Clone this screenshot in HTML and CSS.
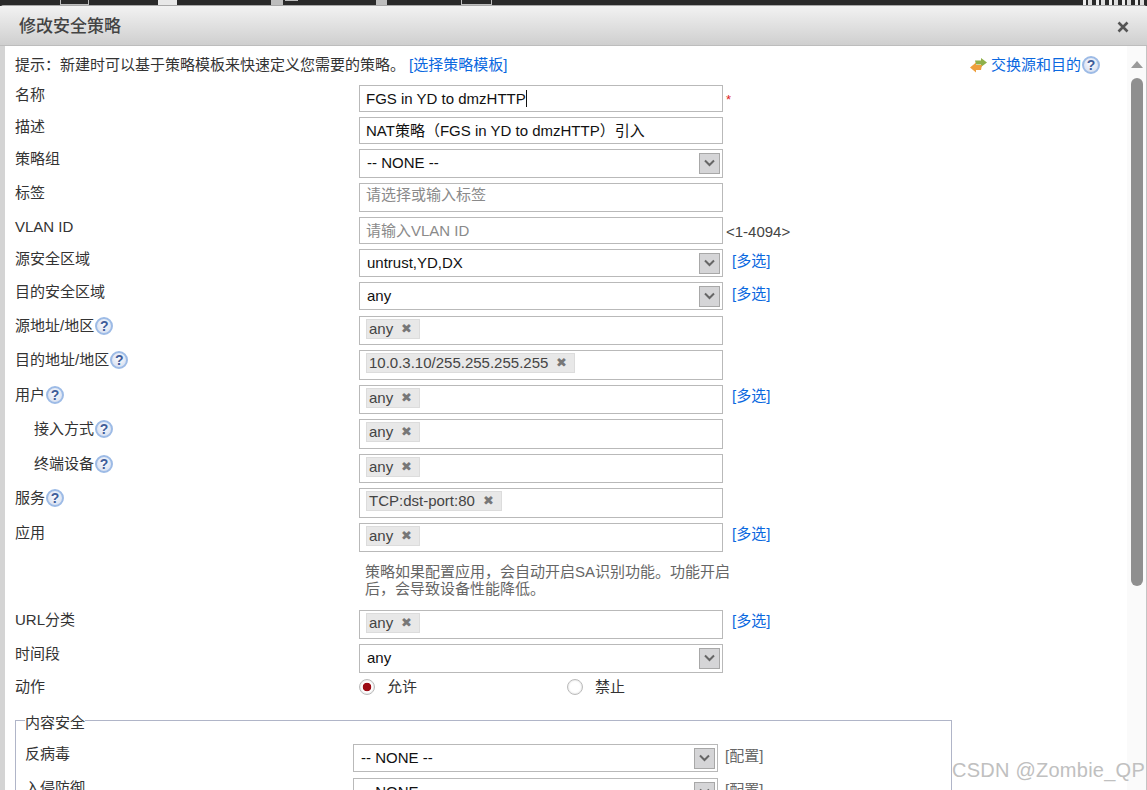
FILE: index.html
```html
<!DOCTYPE html>
<html lang="zh-CN">
<head>
<meta charset="utf-8">
<title>修改安全策略</title>
<link rel="stylesheet" href="styles.css">
</head>
<body>
<div class="backdrop">
  <span class="frag frag-a"></span><span class="frag frag-b"></span><span class="frag frag-c"></span><span class="frag frag-d"></span><span class="frag frag-e"></span><span class="frag frag-f"></span><span class="frag frag-g"></span>
</div>
<div class="dialog">
  <header class="titlebar">
    <h1 class="title">修改安全策略</h1>
    <svg class="close" width="12" height="12" viewBox="0 0 12 12"><path d="M1.5 1.5 10.5 10.5M10.5 1.5 1.5 10.5" stroke="#555" stroke-width="2.6"/></svg>
  </header>
  <div class="body">
    <main class="content">
      <div class="tip">
        <div>提示：新建时可以基于策略模板来快速定义您需要的策略。<a class="link tip-link">[选择策略模板]</a></div>
        <div class="swap">
          <svg class="swap-icon" width="19" height="15" viewBox="0 0 19 15"><path d="M6 2.500h6V0l6 4.500L12 9V6.500H7z" fill="#8fb04a"/><path d="M13 7H7V4.500L1 9.500l6 5V12h5z" fill="#ee9f3c"/></svg>
          <a class="link">交换源和目的</a><span class="help">?</span>
        </div>
      </div>

      <div class="row"><div class="label">名称</div><div class="field h27">FGS in YD to dmzHTTP<span class="caret"></span></div><span class="req">*</span></div>
      <div class="row"><div class="label">描述</div><div class="field h27">NAT策略（FGS in YD to dmzHTTP）引入</div></div>
      <div class="row"><div class="label">策略组</div><div class="field select h29">-- NONE --<span class="arrow"><svg width="13" height="8" viewBox="0 0 13 8"><path d="M2 1.500l4.500 4.500L11 1.500" fill="none" stroke="#666" stroke-width="2"/></svg></span></div></div>
      <div class="row"><div class="label">标签</div><div class="field top h29 ph">请选择或输入标签</div></div>
      <div class="row"><div class="label">VLAN ID</div><div class="field h27 ph">请输入VLAN ID</div><span class="note">&lt;1-4094&gt;</span></div>
      <div class="row"><div class="label">源安全区域</div><div class="field select h28">untrust,YD,DX<span class="arrow"><svg width="13" height="8" viewBox="0 0 13 8"><path d="M2 1.500l4.500 4.500L11 1.500" fill="none" stroke="#666" stroke-width="2"/></svg></span></div><a class="link more">[多选]</a></div>
      <div class="row r6"><div class="label">目的安全区域</div><div class="field select h28">any<span class="arrow"><svg width="13" height="8" viewBox="0 0 13 8"><path d="M2 1.500l4.500 4.500L11 1.500" fill="none" stroke="#666" stroke-width="2"/></svg></span></div><a class="link more">[多选]</a></div>
      <div class="row"><div class="label">源地址/地区<span class="help">?</span></div><div class="field tags h29"><span class="tag">any<i class="x">✖</i></span></div></div>
      <div class="row"><div class="label">目的地址/地区<span class="help">?</span></div><div class="field tags h30"><span class="tag">10.0.3.10/255.255.255.255<i class="x">✖</i></span></div></div>
      <div class="row"><div class="label">用户<span class="help">?</span></div><div class="field tags h29"><span class="tag">any<i class="x">✖</i></span></div><a class="link more">[多选]</a></div>
      <div class="row"><div class="label sub">接入方式<span class="help">?</span></div><div class="field tags h30"><span class="tag">any<i class="x">✖</i></span></div></div>
      <div class="row"><div class="label sub">终端设备<span class="help">?</span></div><div class="field tags h29"><span class="tag">any<i class="x">✖</i></span></div></div>
      <div class="row"><div class="label">服务<span class="help">?</span></div><div class="field tags h30"><span class="tag">TCP:dst-port:80<i class="x">✖</i></span></div></div>
      <div class="row"><div class="label">应用</div><div class="field tags h29"><span class="tag">any<i class="x">✖</i></span></div><a class="link more">[多选]</a></div>
      <div class="hint">策略如果配置应用，会自动开启SA识别功能。功能开启后，会导致设备性能降低。</div>
      <div class="row"><div class="label">URL分类</div><div class="field tags h29"><span class="tag">any<i class="x">✖</i></span></div><a class="link more">[多选]</a></div>
      <div class="row"><div class="label">时间段</div><div class="field select h29">any<span class="arrow"><svg width="13" height="8" viewBox="0 0 13 8"><path d="M2 1.500l4.500 4.500L11 1.500" fill="none" stroke="#666" stroke-width="2"/></svg></span></div></div>
      <div class="row action"><div class="label">动作</div>
        <div class="radios">
          <label class="radio"><span class="dot on"></span>允许</label>
          <label class="radio"><span class="dot"></span>禁止</label>
        </div>
      </div>

      <fieldset class="group">
        <legend class="legend">内容安全</legend>
        <div class="row inner"><div class="label">反病毒</div><div class="field select h28">-- NONE --<span class="arrow"><svg width="13" height="8" viewBox="0 0 13 8"><path d="M2 1.500l4.500 4.500L11 1.500" fill="none" stroke="#666" stroke-width="2"/></svg></span></div><span class="conf">[配置]</span></div>
        <div class="row inner"><div class="label">入侵防御</div><div class="field select h28">-- NONE --<span class="arrow"><svg width="13" height="8" viewBox="0 0 13 8"><path d="M2 1.500l4.500 4.500L11 1.500" fill="none" stroke="#666" stroke-width="2"/></svg></span></div><span class="conf">[配置]</span></div>
      </fieldset>
    </main>
    <aside class="scrollbar">
      <span class="up"></span>
      <span class="thumb"></span>
    </aside>
  </div>
</div>
<div class="watermark">CSDN @Zombie_QP</div>
</body>
</html>
```

FILE: styles.css
```css
* { box-sizing: border-box; }
html, body { margin: 0; height: 100%; }
body {
  width: 1147px;
  height: 790px;
  overflow: hidden;
  background: #2b2b2b;
  font: 15px/18px "Liberation Sans", "Noto Sans CJK SC", sans-serif;
  color: #333;
  display: flex;
  flex-direction: column;
  position: relative;
}
.backdrop {
  height: 5px;
  flex: none;
  display: flex;
  background: #2a2a2a;
}
.frag { display: block; height: 5px; background: #bdbdbd; }
.frag-a { width: 30px; margin-left: 60px; background: #2a2a2a; border: 1px solid #bdbdbd; border-width: 0 1px 1px; }
.frag-b { width: 20px; margin-left: 69px; background: #e8e8e8; }
.frag-c { width: 12px; margin-left: 94px; }
.frag-d { width: 13px; margin-left: 2px; background: #2a2a2a; border-top: 1px solid #bdbdbd; }
.frag-e { width: 12px; margin-left: 78px; }
.frag-f { width: 32px; margin-left: 74px; background: #2a2a2a; border: 1px solid #bdbdbd; border-width: 0 1px 1px; }
.frag-g { width: 66px; margin-left: 591px; background: repeating-linear-gradient(90deg, #eee 0 3px, #2a2a2a 3px 5px, #ddd 5px 9px, #2a2a2a 9px 13px); }
.dialog {
  flex: 1;
  min-height: 0;
  display: flex;
  flex-direction: column;
  border-top: 1px solid #a8a8a8;
  background: #d8d8d8;
  border-radius: 4px 4px 0 0;
}
.titlebar {
  flex: none;
  height: 40px;
  padding: 2px 18px 0 19px;
  display: flex;
  align-items: center;
  justify-content: space-between;
  background: linear-gradient(#f2f2f2, #cfcfcf);
  border-bottom: 1px solid #bdbdbd;
}
.title { margin: 0; font-size: 17px; font-weight: 500; color: #444; }
.close { display: block; }
.body {
  flex: 1;
  min-height: 0;
  display: flex;
  overflow: hidden;
  background: #fff;
  border-left: 5px solid #d4d4d4;
  border-right: 1px solid #c4c4c4;
}
.content { flex: 1; min-width: 0; padding: 10px 27px 0 10px; border-left: 1px solid #bbb; margin-left: -1px; }
.tip { display: flex; justify-content: space-between; height: 18px; margin-bottom: 11px; }
.tip-link { margin-left: 4px; }
.swap { display: flex; align-items: center; }
.swap-icon { margin-right: 3px; }
.link { color: #0a68e0; }
.row { display: flex; align-items: flex-start; margin-bottom: 5px; }
.r6 { margin-bottom: 6px; }
.label { width: 344px; flex: none; display: flex; align-items: center; height: 19px; padding-top: 1px; }
.sub { padding-left: 19px; }
.help {
  width: 18px;
  height: 18px;
  flex: none;
  display: inline-flex;
  align-items: center;
  justify-content: center;
  border-radius: 50%;
  border: 2px solid #9dbbe6;
  background: radial-gradient(circle at 50% 40%, #fbfcff, #cfd9ec);
  color: #3f5c99;
  font-size: 14px;
  font-weight: 700;
  line-height: 1;
  margin-left: 1px;
}
.field {
  width: 364px;
  flex: none;
  display: flex;
  align-items: center;
  padding: 0 6px;
  border: 1px solid #b9b9b9;
  background: #fff;
  color: #111;
}
.h27 { height: 27px; }
.h28 { height: 28px; }
.h29 { height: 29px; }
.h30 { height: 30px; }
.top { align-items: flex-start; padding-top: 2px; }
.ph { color: #8a8a8a; }
.caret { width: 1px; height: 17px; background: #111; }
.select { position: relative; justify-content: space-between; padding: 0 2px 0 7px; }
.select.h29 { padding-bottom: 1px; }
.arrow {
  width: 21px;
  height: 21px;
  display: flex;
  align-items: center;
  justify-content: center;
  background: #d5d5d7;
  border: 1px solid #a8a8a8;
}
.tags { align-items: flex-start; padding: 2px 6px; }
.tag {
  height: 20px;
  display: flex;
  align-items: center;
  padding: 0 7px 0 2px;
  background: #e8e8e8;
  border: 1px solid #dcdcdc;
  color: #444;
}
.x { font-style: normal; font-size: 13px; color: #777; margin-left: 8px; }
.req { color: #d22; margin: 6px 0 0 3px; font-size: 13px; }
.note { margin: 6px 0 0 3px; color: #444; font-size: 15px; }
.more { margin: 2px 0 0 9px; }
.select + .more { margin-top: 3px; }
.hint { width: 370px; margin: -1px 0 12px 350px; padding-top: 7px; height: 42px; color: #666; font-size: 15px; line-height: 17px; }
.action { margin-bottom: 12px; }
.action .label { height: 18px; padding-top: 0; }
.radios { display: flex; }
.radio { width: 208px; display: flex; align-items: center; color: #333; font-size: 15px; }
.dot {
  width: 16px;
  height: 16px;
  margin-right: 12px;
  border-radius: 50%;
  border: 1px solid #bbb;
  background: #fff;
  box-shadow: inset 0 0 2px #ccc;
}
.dot.on { background: radial-gradient(circle, #9c0b14 0 4px, #fff 4.6px); }
.group {
  margin: 0;
  width: 937px;
  padding: 12px 10px 0 9px;
  border: 1px solid #b0b5c8;
  border-radius: 0;
  min-width: 0;
}
.legend { padding: 6px 0 0; color: #333; line-height: 18px; }
.inner .label { width: 328px; }
.inner .field { width: 365px; }
.inner { margin-bottom: 6px; }
.conf { margin: 3px 0 0 7px; color: #666; font-size: 15px; }
.scrollbar { width: 19px; flex: none; display: flex; flex-direction: column; align-items: center; background: #fafafa; padding-top: 15px; }
.up { width: 0; height: 0; border: 6.500px solid transparent; border-top: 0; border-bottom: 7px solid #9a9a9a; }
.thumb { width: 12px; height: 508px; margin-top: 10px; border-radius: 6px; background: #8f8f8f; }
.watermark {
  position: absolute;
  left: 952px;
  top: 757px;
  font-size: 20px;
  line-height: 26px;
  letter-spacing: 0.25px;
  color: #c0c0c0;
  white-space: nowrap;
}
```
